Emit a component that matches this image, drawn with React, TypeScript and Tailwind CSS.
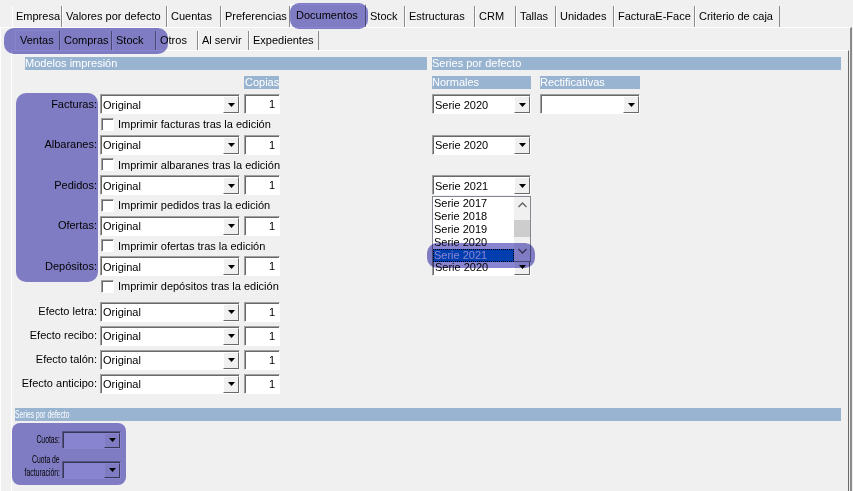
import React from 'react';

const Tri = () => (
  <svg width="7" height="4" viewBox="0 0 7 4">
    <path d="M0 0h7L3.5 4z" fill="#000" />
  </svg>
);

const Combo = ({ w, value = '', h = 'h-[20px]' }: { w: string; value?: string; h?: string }) => (
  <div
    className={`${w} ${h} flex shrink-0 bg-white border border-t-[#a0a0a0] border-l-[#a0a0a0] border-r-white border-b-white shadow-[inset_1px_1px_0_#696969]`}
  >
    <span className="flex-1 pl-[2px] pt-[1px] self-center leading-[14px] whitespace-nowrap overflow-hidden">{value}</span>
    <span className="mt-[1px] mb-0 w-[16px] flex items-center justify-center bg-[#f0f0f0] border border-t-white border-l-white border-r-[#696969] border-b-[#696969]">
      <Tri />
    </span>
  </div>
);

const Copies = () => (
  <div className="ml-[4px] w-[36px] h-[20px] bg-white border border-t-[#a0a0a0] border-l-[#a0a0a0] border-r-white border-b-white shadow-[inset_1px_1px_0_#696969] text-right pr-[4px] leading-[18px]">
    1
  </div>
);

const CheckRow = ({ text }: { text: string }) => (
  <div className="h-[20.5px] pl-[76px] flex items-center gap-[4px]">
    <span className="w-[13px] h-[13px] bg-white border border-t-[#a0a0a0] border-l-[#a0a0a0] border-r-white border-b-white shadow-[inset_1px_1px_0_#696969]" />
    <span>{text}</span>
  </div>
);

const Label = ({ text }: { text: string }) => (
  <div className="w-[75px] shrink-0 flex justify-end pr-[3px] whitespace-nowrap">{text}</div>
);

const topTabs: [string, string][] = [
  ['Empresa', 'w-[50px]'],
  ['Valores por defecto', 'w-[105px]'],
  ['Cuentas', 'w-[54px]'],
  ['Preferencias', 'w-[69px]'],
  ['Documentos', 'w-[76px]'],
  ['Stock', 'w-[39px]'],
  ['Estructuras', 'w-[70px]'],
  ['CRM', 'w-[41px]'],
  ['Tallas', 'w-[40px]'],
  ['Unidades', 'w-[58px]'],
  ['FacturaE-Face', 'w-[81px]'],
  ['Criterio de caja', 'w-[85px]'],
];

const subTabs: [string, string][] = [
  ['Ventas', 'w-[45px]'],
  ['Compras', 'w-[52px]'],
  ['Stock', 'w-[44px]'],
  ['Otros', 'w-[42px]'],
  ['Al servir', 'w-[51px]'],
  ['Expedientes', 'w-[70px]'],
];

// serie shown in the "Normales" column; the Ofertas one sits under the open list
const docRows = [
  { label: 'Facturas:', check: 'Imprimir facturas tras la edición', serie: 'Serie 2020', rect: true },
  { label: 'Albaranes:', check: 'Imprimir albaranes tras la edición', serie: 'Serie 2020' },
  { label: 'Pedidos:', check: 'Imprimir pedidos tras la edición', serie: 'Serie 2021' },
  { label: 'Ofertas:', check: 'Imprimir ofertas tras la edición', serie: '' },
  { label: 'Depósitos:', check: 'Imprimir depósitos tras la edición', serie: 'Serie 2020' },
];

const efectos = ['Efecto letra:', 'Efecto recibo:', 'Efecto talón:', 'Efecto anticipo:'];

const listItems = ['Serie 2017', 'Serie 2018', 'Serie 2019', 'Serie 2020', 'Serie 2021'];

const App: React.FC = () => {
  return (
    <div className="relative w-[853px] h-[491px] overflow-hidden bg-[#f0f0f0] text-[11px] text-black font-['Liberation_Sans',Arial,sans-serif]">
      {/* Top tabs */}
      <div className="flex pl-[12px] pt-[6px] h-[27px]">
        {topTabs.map(([t, w]) => (
          <div
            key={t}
            className={`${w} h-[21px] pl-[3px] leading-[21px] whitespace-nowrap border-l border-l-white border-r border-r-[#8a8a8a] ${
              t === 'Documentos' ? '-mt-[2px] h-[23px] leading-[19px] pl-[5px] border-t border-t-white' : ''
            }`}
          >
            {t}
          </div>
        ))}
      </div>

      {/* Outer panel */}
      <div className="w-[852px] h-[464px] border-t border-t-white border-l border-l-white border-r-2 border-r-[#8a8a8a]">
        <div className="flex pl-[14px] pt-[3px] h-[22px]">
          {subTabs.map(([t, w], i) => (
            <div
              key={t}
              className={`${w} h-[19px] pl-[3px] leading-[19px] whitespace-nowrap border-l border-l-white border-r border-r-[#8a8a8a] ${
                i === 0 ? '-mt-[1px] h-[20px] leading-[16px] pl-[4px] border-t border-t-white' : ''
              }`}
            >
              {t}
            </div>
          ))}
        </div>

        {/* Inner panel */}
        <div className="ml-[10px] w-[838px] h-[442px] border-t border-t-white border-l border-l-white border-r border-r-[#696969] pl-[13px] pt-[6px]">
          {/* headers */}
          <div className="flex gap-[5px]">
            <div className="w-[402px] h-[13px] bg-[#99b4d1] text-white leading-[13px]">Modelos impresión</div>
            <div className="w-[409px] h-[13px] bg-[#99b4d1] text-white leading-[13px]">Series por defecto</div>
          </div>
          <div className="flex mt-[6px] h-[13px]">
            <div className="w-[407px] flex">
              <div className="ml-[219px] w-[35px] bg-[#99b4d1] text-white leading-[13px] pl-[1px]">Copias</div>
            </div>
            <div className="w-[99px] bg-[#99b4d1] text-white leading-[13px]">Normales</div>
            <div className="ml-[9px] w-[100px] bg-[#99b4d1] text-white leading-[13px]">Rectificativas</div>
          </div>

          {/* document rows */}
          <div className="relative mt-[5px]">
            {docRows.map((r) => (
              <div key={r.label}>
                <div className="flex items-center h-[20px]">
                  <div className="w-[407px] flex items-center">
                    <Label text={r.label} />
                    <Combo w="w-[140px]" value="Original" />
                    <Copies />
                  </div>
                  <Combo w="w-[99px]" value={r.serie} />
                  {r.rect && (
                    <div className="ml-[9px]">
                      <Combo w="w-[100px]" />
                    </div>
                  )}
                </div>
                <CheckRow text={r.check} />
              </div>
            ))}

            {/* open dropdown list */}
            <div className="absolute left-[407px] top-[102px] w-[99px] h-[66px] bg-white border border-[#828790] flex">
              <div className="flex-1 flex flex-col">
                {listItems.map((s) => (
                  <div
                    key={s}
                    className={`h-[13px] leading-[13px] pl-[1px] whitespace-nowrap ${
                      s === 'Serie 2021' ? 'bg-[#0078d7] text-white outline-1 outline-dotted outline-offset-[-1px] outline-[#000]' : ''
                    }`}
                  >
                    {s}
                  </div>
                ))}
              </div>
              <div className="w-[16px] bg-[#f0f0f0] flex flex-col items-center">
                <svg className="mt-[5px]" width="9" height="6" viewBox="0 0 9 6">
                  <path d="M0.5 5 4.5 1 8.5 5" fill="none" stroke="#606060" strokeWidth="1.3" />
                </svg>
                <div className="mt-[12px] w-[16px] h-[17px] bg-[#cdcdcd]" />
                <svg className="mt-[11px]" width="9" height="6" viewBox="0 0 9 6">
                  <path d="M0.5 1 4.5 5 8.5 1" fill="none" stroke="#606060" strokeWidth="1.3" />
                </svg>
              </div>
            </div>
          </div>

          {/* efectos */}
          <div className="mt-[5px] flex flex-col gap-[4px]">
            {efectos.map((e) => (
              <div key={e} className="flex items-center h-[20px]">
                <Label text={e} />
                <Combo w="w-[140px]" value="Original" />
                <Copies />
              </div>
            ))}
          </div>

          {/* bottom section */}
          <div className="mt-[14px] -ml-[10px] w-[826px] h-[13px] bg-[#99b4d1] text-white leading-[13px] whitespace-nowrap">
            <span className="inline-block origin-left scale-x-[0.61]">Series por defecto</span>
          </div>
          <div className="-ml-[13px] mt-[10px] flex items-center h-[18px]">
            <div className="w-[50px] flex justify-end pr-[2px] whitespace-nowrap">
              <span className="inline-block origin-right scale-x-[0.62]">Cuotas:</span>
            </div>
            <Combo w="w-[59px]" h="h-[18px]" />
          </div>
          <div className="-ml-[13px] mt-[4px] flex items-end">
            <div className="w-[50px] flex flex-col items-end pr-[2px] leading-[13px] whitespace-nowrap">
              <span className="inline-block origin-right scale-x-[0.62]">Cuota de</span>
              <span className="inline-block origin-right scale-x-[0.62]">facturación:</span>
            </div>
            <Combo w="w-[59px]" h="h-[18px]" />
          </div>
        </div>
      </div>

      {/* highlight overlays */}
      <div className="absolute left-[290px] top-[3px] w-[78px] h-[26px] rounded-[9px] bg-[#8884d0] mix-blend-multiply" />
      <div className="absolute left-[4px] top-[28px] w-[164px] h-[26px] rounded-[10px] bg-[#8884d0] mix-blend-multiply" />
      <div className="absolute left-[16px] top-[93px] w-[82px] h-[189px] rounded-[10px] bg-[#8884d0] mix-blend-multiply" />
      <div className="absolute left-[427px] top-[243px] w-[108px] h-[25px] rounded-[10px] bg-[#8884d0] mix-blend-multiply" />
      <div className="absolute left-[12px] top-[423px] w-[114px] h-[62px] rounded-[8px] bg-[#8884d0] mix-blend-multiply" />
    </div>
  );
};

export default App;
